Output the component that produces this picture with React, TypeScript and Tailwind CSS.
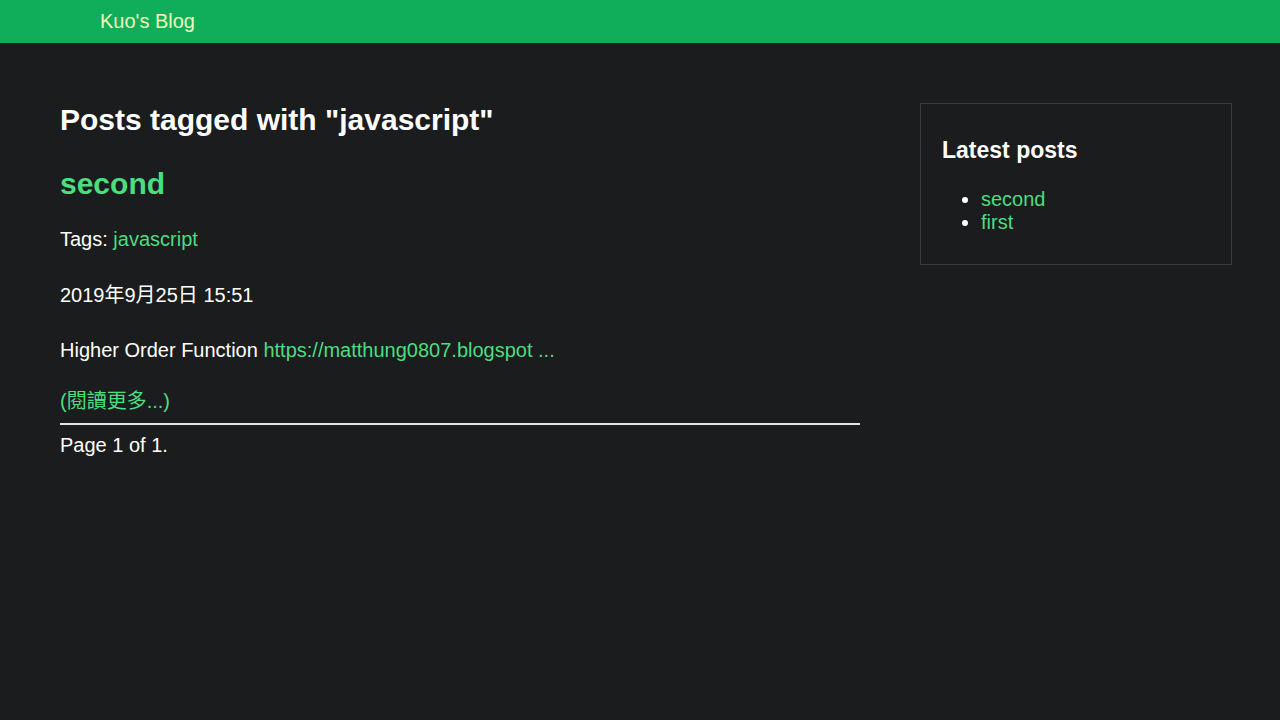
const latest = ['second', 'first'];

const App = () =>
{
  return (
    <div className="min-h-screen bg-[#1b1c1e] text-white font-['Liberation_Sans','Noto_Sans_CJK_TC',sans-serif]">
      <header className="h-[43px] bg-[#10ae5b] flex items-center pl-[100px]">
        <a href="#" className="text-[20px] leading-[23px] text-[#eef8b8]">Kuo's Blog</a>
      </header>

      <div className="flex pt-[60px]">
        {/* main column */}
        <main className="w-[800px] ml-[60px]">
          <h1 className="text-[30px] leading-[34px] font-bold">Posts tagged with "javascript"</h1>

          <h2 className="mt-[30px] text-[30px] leading-[34px] font-bold text-[#4ade80]">
            <a href="#">second</a>
          </h2>

          <p className="mt-[27px] text-[20px] leading-[23px]">
            Tags: <a href="#" className="text-[#4ade80]">javascript</a>
          </p>

          <p className="mt-[33px] text-[20px] leading-[23px]">2019年9月25日 15:51</p>

          <p className="mt-[32px] text-[20px] leading-[23px]">
            Higher Order Function <a href="#" className="text-[#4ade80]">https://matthung0807.blogspot ...</a>
          </p>

          <p className="mt-[28px] text-[20px] leading-[23px]">
            <a href="#" className="text-[#4ade80]">(閱讀更多...)</a>
          </p>

          <hr className="mt-[10px] border-t-2 border-[#e5e5e5]" />

          <p className="mt-[9px] text-[20px] leading-[23px]">Page 1 of 1.</p>
        </main>

        {/* sidebar */}
        <aside className="ml-[60px] w-[312px] self-start border border-[#38393b] pl-[21px] pt-[33px] pb-[30px]">
          <h3 className="text-[23px] leading-[27px] font-bold">Latest posts</h3>
          <ul className="mt-[24px] pl-[39px] list-disc text-[20px] leading-[23px]">
            {latest.map((title) => (
              <li key={title}>
                <a href="#" className="text-[#4ade80]">{title}</a>
              </li>
            ))}
          </ul>
        </aside>
      </div>
    </div>
  );
};

export default App;
